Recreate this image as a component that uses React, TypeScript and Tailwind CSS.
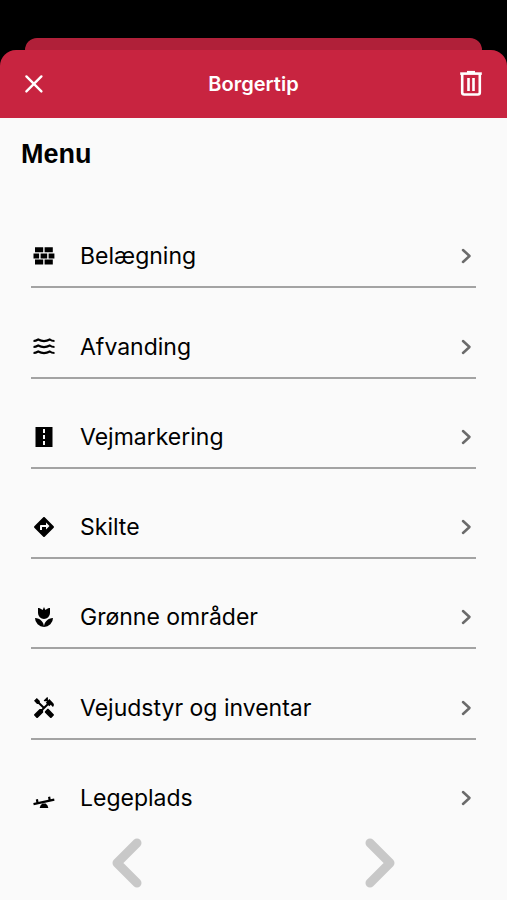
import type { ReactNode } from "react";

type MenuItem = {
  id: string;
  label: string;
  icon: ReactNode;
};

const items: MenuItem[] = [
  {
    id: "belaegning",
    label: "Belægning",
    icon: (
      <path d="M3 3.2h8.2v5H3zM12.6 3.2h8.2v5h-8.2zM1.5 9.4h5.6v5H1.5zM8.6 9.4h6.6v5H8.6zM16.6 9.4h5.8v5h-5.8zM3 15.6h8.2v5H3zM12.6 15.6h8.2v5h-8.2z" />
    ),
  },
  {
    id: "afvanding",
    label: "Afvanding",
    icon: (
      <path
        d="M1.5 6c1.8 0 3-.5 4.700-1.500 3.600 2 8 2 11.600 0 1.200 1 2.900 1.500 4.700 1.500M1.500 12c1.800 0 3-.5 4.700-1.500 3.600 2 8 2 11.600 0 1.200 1 2.900 1.500 4.700 1.500M1.500 18c1.800 0 3-.5 4.700-1.500 3.600 2 8 2 11.600 0 1.200 1 2.900 1.500 4.700 1.500"
        fill="none"
        stroke="currentColor"
        strokeWidth="2.2"
      />
    ),
  },
  {
    id: "vejmarkering",
    label: "Vejmarkering",
    icon: <path d="M11 16h2v4h-2zM11 10h2v4h-2zM11 4h2v4h-2zM3.500 22h17V2h-17z" fillRule="evenodd" />,
  },
  {
    id: "skilte",
    label: "Skilte",
    icon: (
      <path d="M21.71 11.29l-9-9c-.39-.39-1.02-.39-1.41 0l-9 9c-.39.39-.39 1.02 0 1.41l9 9c.39.39 1.02.39 1.41 0l9-9c.39-.38.39-1.01 0-1.41zM14 14.5V12h-4v3H8v-4c0-.55.45-1 1-1h5V7.5l3.5 3.5-3.5 3.5z" />
    ),
  },
  {
    id: "groenne-omraader",
    label: "Grønne områder",
    icon: (
      <path d="M3 13a9 9 0 0 0 9 9c0-4.97-4.03-9-9-9m9 9a9 9 0 0 0 9-9c-4.97 0-9 4.03-9 9m6-19v5a6 6 0 0 1-6 6 6 6 0 0 1-6-6V3c.74 0 1.47.12 2.16.39.95.35 1.79.9 2.47 1.61L12 2l1.37 3c.68-.71 1.52-1.26 2.47-1.61C16.53 3.12 17.26 3 18 3z" />
    ),
  },
  {
    id: "vejudstyr",
    label: "Vejudstyr og inventar",
    icon: (
      <>
        <path d="m21.67 18.17-5.3-5.3h-.99l-2.54 2.54v.99l5.3 5.3c.39.39 1.02.39 1.41 0l2.12-2.12a.996.996 0 0 0 0-1.41z" />
        <path d="m17.34 10.19 1.41-1.41 2.12 2.12a3 3 0 0 0 0-4.24l-3.54-3.54-1.41 1.41V1.71L15.22 1l-3.54 3.54.71.71h2.83l-1.41 1.41 1.06 1.06-2.89 2.89-4.13-4.13V5.06L4.83 2.04 2 4.87 5.03 7.9h1.41l4.13 4.13-.85.85H7.6l-5.3 5.3a.996.996 0 0 0 0 1.41l2.12 2.12c.39.39 1.02.39 1.41 0l5.3-5.3v-2.12l5.15-5.15z" />
      </>
    ),
  },
  {
    id: "legeplads",
    label: "Legeplads",
    icon: (
      <>
        <path d="M1.5 18.1L22.3 13.7" stroke="currentColor" strokeWidth="2.2" />
        <path d="M4.9 13.2l.7 4M17.1 10.800l.7 4" stroke="currentColor" strokeWidth="2.2" />
        <path d="M10.300 17.500h3.400q2.300 1.500 2.600 4.500H7.700q.3-3 2.600-4.500z" />
      </>
    ),
  },
];

function MenuRow({ item }: { item: MenuItem }) {
  return (
    <li className="flex flex-1 border-b-2 border-[#a3a3a3] last:border-transparent">
      <button type="button" className="flex w-full items-end pt-8 pb-4 pl-px text-left">
        <svg viewBox="0 0 24 24" className="mb-0.5 h-6 w-6 shrink-0 fill-black" aria-hidden="true">
          {item.icon}
        </svg>
        <span className="ml-6 flex-1 text-[23px] leading-7">{item.label}</span>
        <svg
          viewBox="0 0 20 28"
          className="h-7 w-5 shrink-0 fill-none stroke-[#6b6b6b] stroke-[2.5]"
          strokeLinecap="round"
          strokeLinejoin="round"
          aria-hidden="true"
        >
          <path d="M7 8l6.5 6L7 20" />
        </svg>
      </button>
    </li>
  );
}

export default function App() {
  return (
    <div className="flex min-h-screen flex-col bg-black pt-[38px] font-['Inter',sans-serif] text-black">
      <div className="mx-[25px] h-3 rounded-t-xl bg-[#b02039]" />
      <div className="flex flex-1 flex-col bg-black">
        <header className="grid h-[68px] grid-cols-[1fr_auto_1fr] items-center rounded-t-2xl bg-[#c82440] px-6 text-white">
          <button type="button" aria-label="Luk" className="justify-self-start">
            <svg
              viewBox="0 0 20 20"
              className="h-5 w-5 fill-none stroke-white stroke-[2.4]"
              strokeLinecap="round"
              aria-hidden="true"
            >
              <path d="M2.4 2.4l15 15M17.4 2.4l-15 15" />
            </svg>
          </button>
          <h1 className="text-[20px] leading-6 font-semibold">Borgertip</h1>
          <button type="button" aria-label="Slet" className="justify-self-end">
            <svg viewBox="0 0 24 28" className="h-7 w-6 fill-none stroke-white stroke-[2.6]" aria-hidden="true">
              <path d="M1.2 3.6h21.6" />
              <path d="M8 2.2h8" />
              <path d="M3.2 4v18.5q0 2 2 2h13.6q2 0 2-2V4" />
              <path d="M9.5 8v13M14.5 8v13" />
            </svg>
          </button>
        </header>

        <main className="flex flex-1 flex-col bg-[#fafafa]">
          <h2 className="px-[21px] pt-5 font-['Liberation_Sans',sans-serif] text-[27px] leading-8 font-bold">
            Menu
          </h2>
          <ul className="mt-7 flex flex-1 flex-col px-[31px]">
            {items.map((item) => (
              <MenuRow key={item.id} item={item} />
            ))}
          </ul>
          <nav className="flex h-[70px] items-center justify-around pb-1" aria-label="Sider">
            <button type="button" aria-label="Forrige">
              <svg
                viewBox="0 0 32 50"
                className="h-[50px] w-8 fill-none stroke-[#c8c8c8] stroke-[9]"
                strokeLinecap="round"
                strokeLinejoin="round"
                aria-hidden="true"
              >
                <path d="M26 5L6 25l20 20" />
              </svg>
            </button>
            <button type="button" aria-label="Næste">
              <svg
                viewBox="0 0 32 50"
                className="h-[50px] w-8 fill-none stroke-[#c8c8c8] stroke-[9]"
                strokeLinecap="round"
                strokeLinejoin="round"
                aria-hidden="true"
              >
                <path d="M6 5l20 20L6 45" />
              </svg>
            </button>
          </nav>
        </main>
      </div>
    </div>
  );
}
